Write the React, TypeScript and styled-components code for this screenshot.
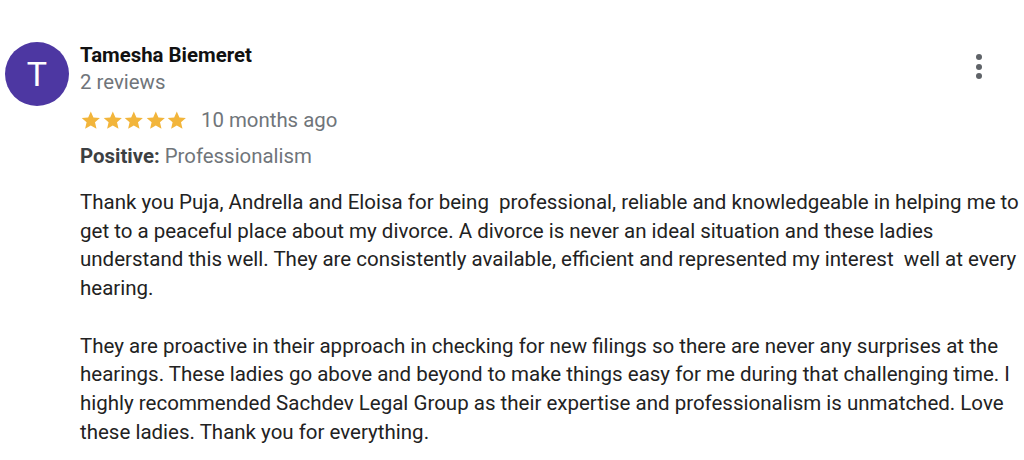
import styled, { createGlobalStyle } from "styled-components";

const GlobalStyle = createGlobalStyle`
  body {
    margin: 0;
    background: #fff;
    font-family: Roboto, "Liberation Sans", Arial, sans-serif;
  }
`

const Review = styled.div`
  position: relative;
  width: 1024px;
  height: 460px;
  box-sizing: border-box;
  padding: 42px 0 0 5px;
  display: flex;
  gap: 11px;
  overflow: hidden;
`

const Avatar = styled.div`
  width: 64px;
  height: 64px;
  border-radius: 50%;
  background: #4d37a2;
  color: #fff;
  font-size: 34px;
  display: flex;
  align-items: center;
  justify-content: center;
  flex-shrink: 0;
`

const Body = styled.div`
  display: flex;
  flex-direction: column;
  width: 944px;
  flex-shrink: 0;
`

const Name = styled.div`
  font-size: 20.4px;
  font-weight: 700;
  color: #111;
  line-height: 26px;
`

const Sub = styled.div`
  font-size: 20.4px;
  color: #70757a;
  line-height: 29px;
`

const MetaRow = styled.div`
  display: flex;
  align-items: center;
  gap: 13px;
  margin-top: 10px;
  height: 26px;
`

const Stars = styled.div`
  display: flex;
`

const Tag = styled.div`
  font-size: 20.4px;
  color: #70757a;
  margin-top: 10px;
  line-height: 26px;

  b {
    color: #3c4043;
    font-weight: 700;
  }
`

const Text = styled.p`
  margin: 19px 0 0;
  font-size: 20.5px;
  line-height: 28.7px;
  color: #222;
  white-space: pre-wrap;
`

const MenuButton = styled.div`
  position: absolute;
  top: 54px;
  left: 976px;
  display: flex;
  flex-direction: column;
  gap: 3.5px;

  span {
    width: 6px;
    height: 6px;
    border-radius: 50%;
    background: #5f6368;
  }
`

function Star() {
  return (
    <svg width="21.6" height="21" viewBox="0 0 24 24">
      <path
        fill="#f2b53b"
        d="M12 1.8l3 6.8 7.4.6-5.6 4.9 1.7 7.3L12 17.6l-6.5 3.8 1.7-7.3-5.6-4.9 7.4-.6z"
      />
    </svg>
  )
}

export default function App() {
  return (
    <>
      <GlobalStyle/>
      <Review>
        <Avatar>T</Avatar>
        <Body>
          <Name>Tamesha Biemeret</Name>
          <Sub>2 reviews</Sub>
          <MetaRow>
            <Stars>
              {[0, 1, 2, 3, 4].map(i => <Star key={i}/>)}
            </Stars>
            <Sub>10 months ago</Sub>
          </MetaRow>
          <Tag><b>Positive:</b> Professionalism</Tag>
          <Text>
            {"Thank you Puja, Andrella and Eloisa for being  professional, reliable and knowledgeable in helping me to get to a peaceful place about my divorce. A divorce is never an ideal situation and these ladies understand this well. They are consistently available, efficient and represented my interest  well at every hearing.\n\nThey are proactive in their approach in checking for new filings so there are never any surprises at the hearings. These ladies go above and beyond to make things easy for me during that challenging time. I highly recommended Sachdev Legal Group as their expertise and professionalism is unmatched. Love these ladies. Thank you for everything."}
          </Text>
        </Body>
        <MenuButton>
          <span/>
          <span/>
          <span/>
        </MenuButton>
      </Review>
    </>
  )
}
